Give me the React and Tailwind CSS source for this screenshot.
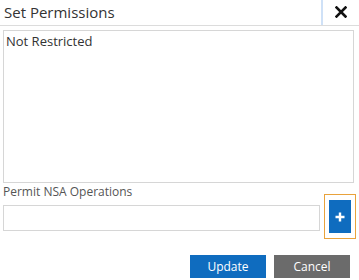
import React from 'react';

const PermissionsDialog = () => {
  return (
    <div className="w-[359px] h-[280px] bg-white overflow-hidden" style={{ fontFamily: '"Open Sans", "Liberation Sans", sans-serif' }}>
      <div className="flex h-[26px] border-b border-[#dcdcdc] items-stretch">
        <div className="flex-1 pl-[4px] pt-[1px] text-[15px] leading-[22px] text-[#333]">Set Permissions</div>
        <div className="w-[2px] bg-[#cfe1f7]" />
        <button className="w-[36px] flex items-center justify-center pb-[2px]">
          <svg width="12" height="12" viewBox="0 0 12 12">
            <path d="M1.5 1.5 L10.5 10.5 M10.5 1.5 L1.5 10.5" stroke="#111" strokeWidth="2.6" strokeLinecap="square" />
          </svg>
        </button>
      </div>

      <div className="px-[3px] pt-[4px]">
        <div className="w-[351px] h-[153px] border border-[#d6d6d6] px-[2px] pt-[1px] text-[13px] leading-[18px] text-[#333]">
          Not Restricted
        </div>
        <div className="mt-[2px] text-[12px] leading-[14px] text-[#555]">Permit NSA Operations</div>
        <div className="flex items-start mt-[-5px]">
          <input
            type="text"
            className="mt-[11px] w-[320px] h-[26px] border border-[#d6d6d6] outline-none"
          />
          <div className="ml-[4px] border border-[#e9a23b] px-[4px] py-[5px]">
            <button className="w-[22px] h-[33px] bg-[#0f6cbf] flex items-center justify-center">
              <svg width="10" height="10" viewBox="0 0 10 10">
                <path d="M5 0.5 V9.5 M0.5 5 H9.5" stroke="#fff" strokeWidth="2.4" />
              </svg>
            </button>
          </div>
        </div>
        <div className="flex justify-end gap-[8px] mt-[16px] pr-[6px]">
          <button className="w-[76px] h-[23px] bg-[#0f6cbf] text-white text-[12px]">Update</button>
          <button className="w-[76px] h-[23px] bg-[#6b6b6b] text-white text-[12px]">Cancel</button>
        </div>
      </div>
    </div>
  );
};

export default function App() {
  return <PermissionsDialog />;
}
